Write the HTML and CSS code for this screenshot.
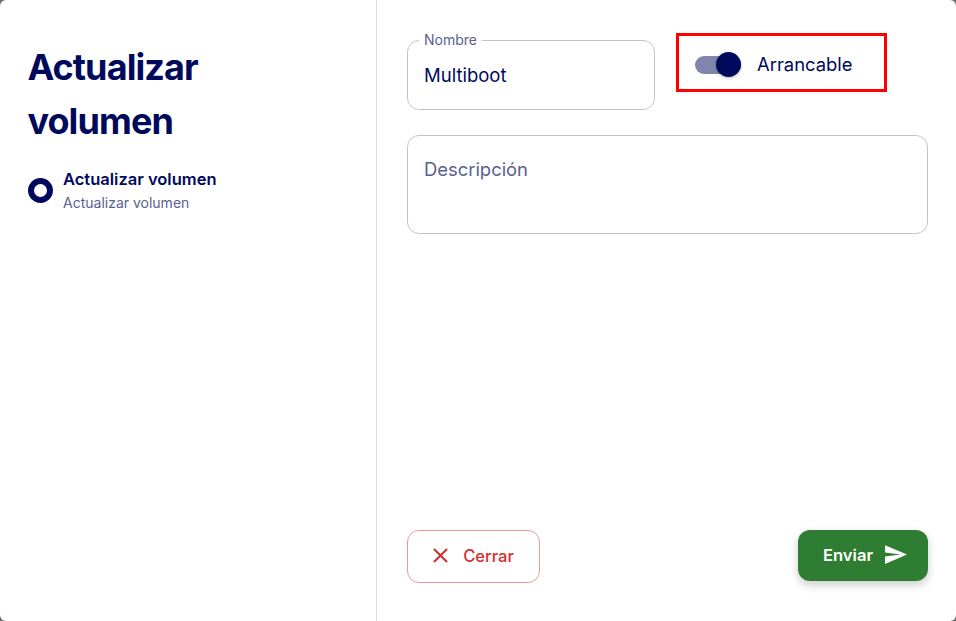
FILE: index.html
```html
<!DOCTYPE html>
<html lang="es">
<head>
  <meta charset="UTF-8">
  <meta name="viewport" content="width=device-width, initial-scale=1.0">
  <title>Actualizar volumen</title>
  <link rel="stylesheet" href="styles.css">
</head>
<body>

<div class="dialog">
  <!-- Steps -->
  <aside class="sidebar">
    <h1>Actualizar volumen</h1>
    <div class="step">
      <span class="step-dot"></span>
      <div>
        <div class="step-title">Actualizar volumen</div>
        <div class="step-sub">Actualizar volumen</div>
      </div>
    </div>
  </aside>

  <!-- Form -->
  <main class="content">
    <div class="row">
      <div class="field field-name">
        <label class="field-label" for="nombre">Nombre</label>
        <input type="text" id="nombre" value="Multiboot">
      </div>
      <div class="switch-box">
        <span class="switch">
          <span class="switch-thumb"></span>
        </span>
        <span class="switch-label">Arrancable</span>
      </div>
    </div>

    <div class="field field-desc">
      <textarea placeholder="Descripción"></textarea>
    </div>

    <div class="actions">
      <button class="btn btn-close">
        <svg width="25" height="25" viewBox="0 0 24 24" fill="currentColor"><path d="M19 6.41 17.59 5 12 10.59 6.41 5 5 6.41 10.59 12 5 17.59 6.41 19 12 13.41 17.59 19 19 17.59 13.41 12z"/></svg>
        Cerrar
      </button>
      <button class="btn btn-send">
        Enviar
        <svg width="25" height="25" viewBox="0 0 24 24" fill="currentColor"><path d="M2.01 21 23 12 2.01 3 2 10l15 2-15 2z"/></svg>
      </button>
    </div>
  </main>
</div>

</body>
</html>
```

FILE: styles.css
```css
* {
  box-sizing: border-box;
}

html, body {
  height: 100%;
}

body {
  margin: 0;
  background: #6b6b6b;
  font-family: 'Inter', sans-serif;
  color: #000a5c;
}

.dialog {
  display: flex;
  height: 621px;
  background: white;
  border-radius: 6px;
  overflow: hidden;
}

.sidebar {
  width: 377px;
  flex-shrink: 0;
  padding: 40px 28px 0;
  border-right: 1px solid #dcdde8;
}

.sidebar h1 {
  margin: 0 0 0 -0.6px;
  width: 260px;
  font-size: 36px;
  font-weight: 700;
  line-height: 54px;
  letter-spacing: -0.9px;
}

.step {
  display: flex;
  align-items: center;
  gap: 10px;
  margin-top: 19px;
}

.step-dot {
  width: 25px;
  height: 25px;
  border: 6px solid #000a5c;
  border-radius: 50%;
}

.step-title {
  font-size: 16.5px;
  font-weight: 600;
  line-height: 24px;
}

.step-sub {
  font-size: 14px;
  line-height: 23px;
  color: #5a6190;
}

.content {
  flex: 1;
  display: flex;
  flex-direction: column;
  padding: 33px 28px 38px 30px;
}

.row {
  display: flex;
  gap: 21px;
}

.field {
  position: relative;
  border: 1px solid #c4c4c4;
  border-radius: 12px;
}

.field-name {
  width: 248px;
  height: 70px;
  margin-top: 7px;
}

.field-label {
  position: absolute;
  top: -11px;
  left: 11px;
  padding: 0 5px;
  background: white;
  font-size: 14px;
  line-height: 20px;
  color: #5a6190;
}

input[type="text"], textarea {
  display: block;
  width: 100%;
  border: none;
  outline: none;
  background: none;
  font-family: inherit;
  font-size: 18.5px;
  color: #000a5c;
}

input[type="text"] {
  height: 68px;
  padding: 0 16px;
}

textarea {
  height: 97px;
  padding: 22px 16px 0;
  resize: none;
  font-size: 18.4px;
}

textarea::placeholder {
  color: #5a6190;
  opacity: 1;
}

.switch-box {
  display: flex;
  align-items: center;
  gap: 16px;
  width: 211px;
  height: 59px;
  padding: 2px 0 0 16px;
  border: 3px solid #f00;
}

.switch {
  position: relative;
  display: block;
  width: 46px;
  height: 18px;
  margin-top: 2px;
  background: #8085ad;
  border-radius: 9px;
}

.switch-thumb {
  position: absolute;
  top: -3.5px;
  right: 0;
  width: 25px;
  height: 25px;
  background: #000a5c;
  border-radius: 50%;
  box-shadow: 0 1px 3px rgba(0, 0, 0, 0.3);
}

.switch-label {
  font-size: 18.4px;
}

.field-desc {
  height: 99px;
  margin-top: 25px;
}

.actions {
  display: flex;
  justify-content: space-between;
  align-items: flex-start;
  margin-top: auto;
}

.btn {
  display: flex;
  align-items: center;
  justify-content: center;
  border-radius: 12px;
  font-family: inherit;
  font-size: 16.6px;
  cursor: pointer;
}

.btn-close {
  gap: 10px;
  width: 133px;
  height: 53px;
  padding: 0 5px 2px 0;
  background: white;
  border: 1px solid #e99a9a;
  color: #d32f2f;
  font-weight: 500;
}

.btn-send {
  gap: 10px;
  width: 130px;
  height: 51px;
  padding: 0 0 2px 5px;
  background: #2e7d32;
  border: none;
  color: white;
  font-weight: 600;
  box-shadow: 0 4px 10px rgba(0, 0, 0, 0.2);
}
```
